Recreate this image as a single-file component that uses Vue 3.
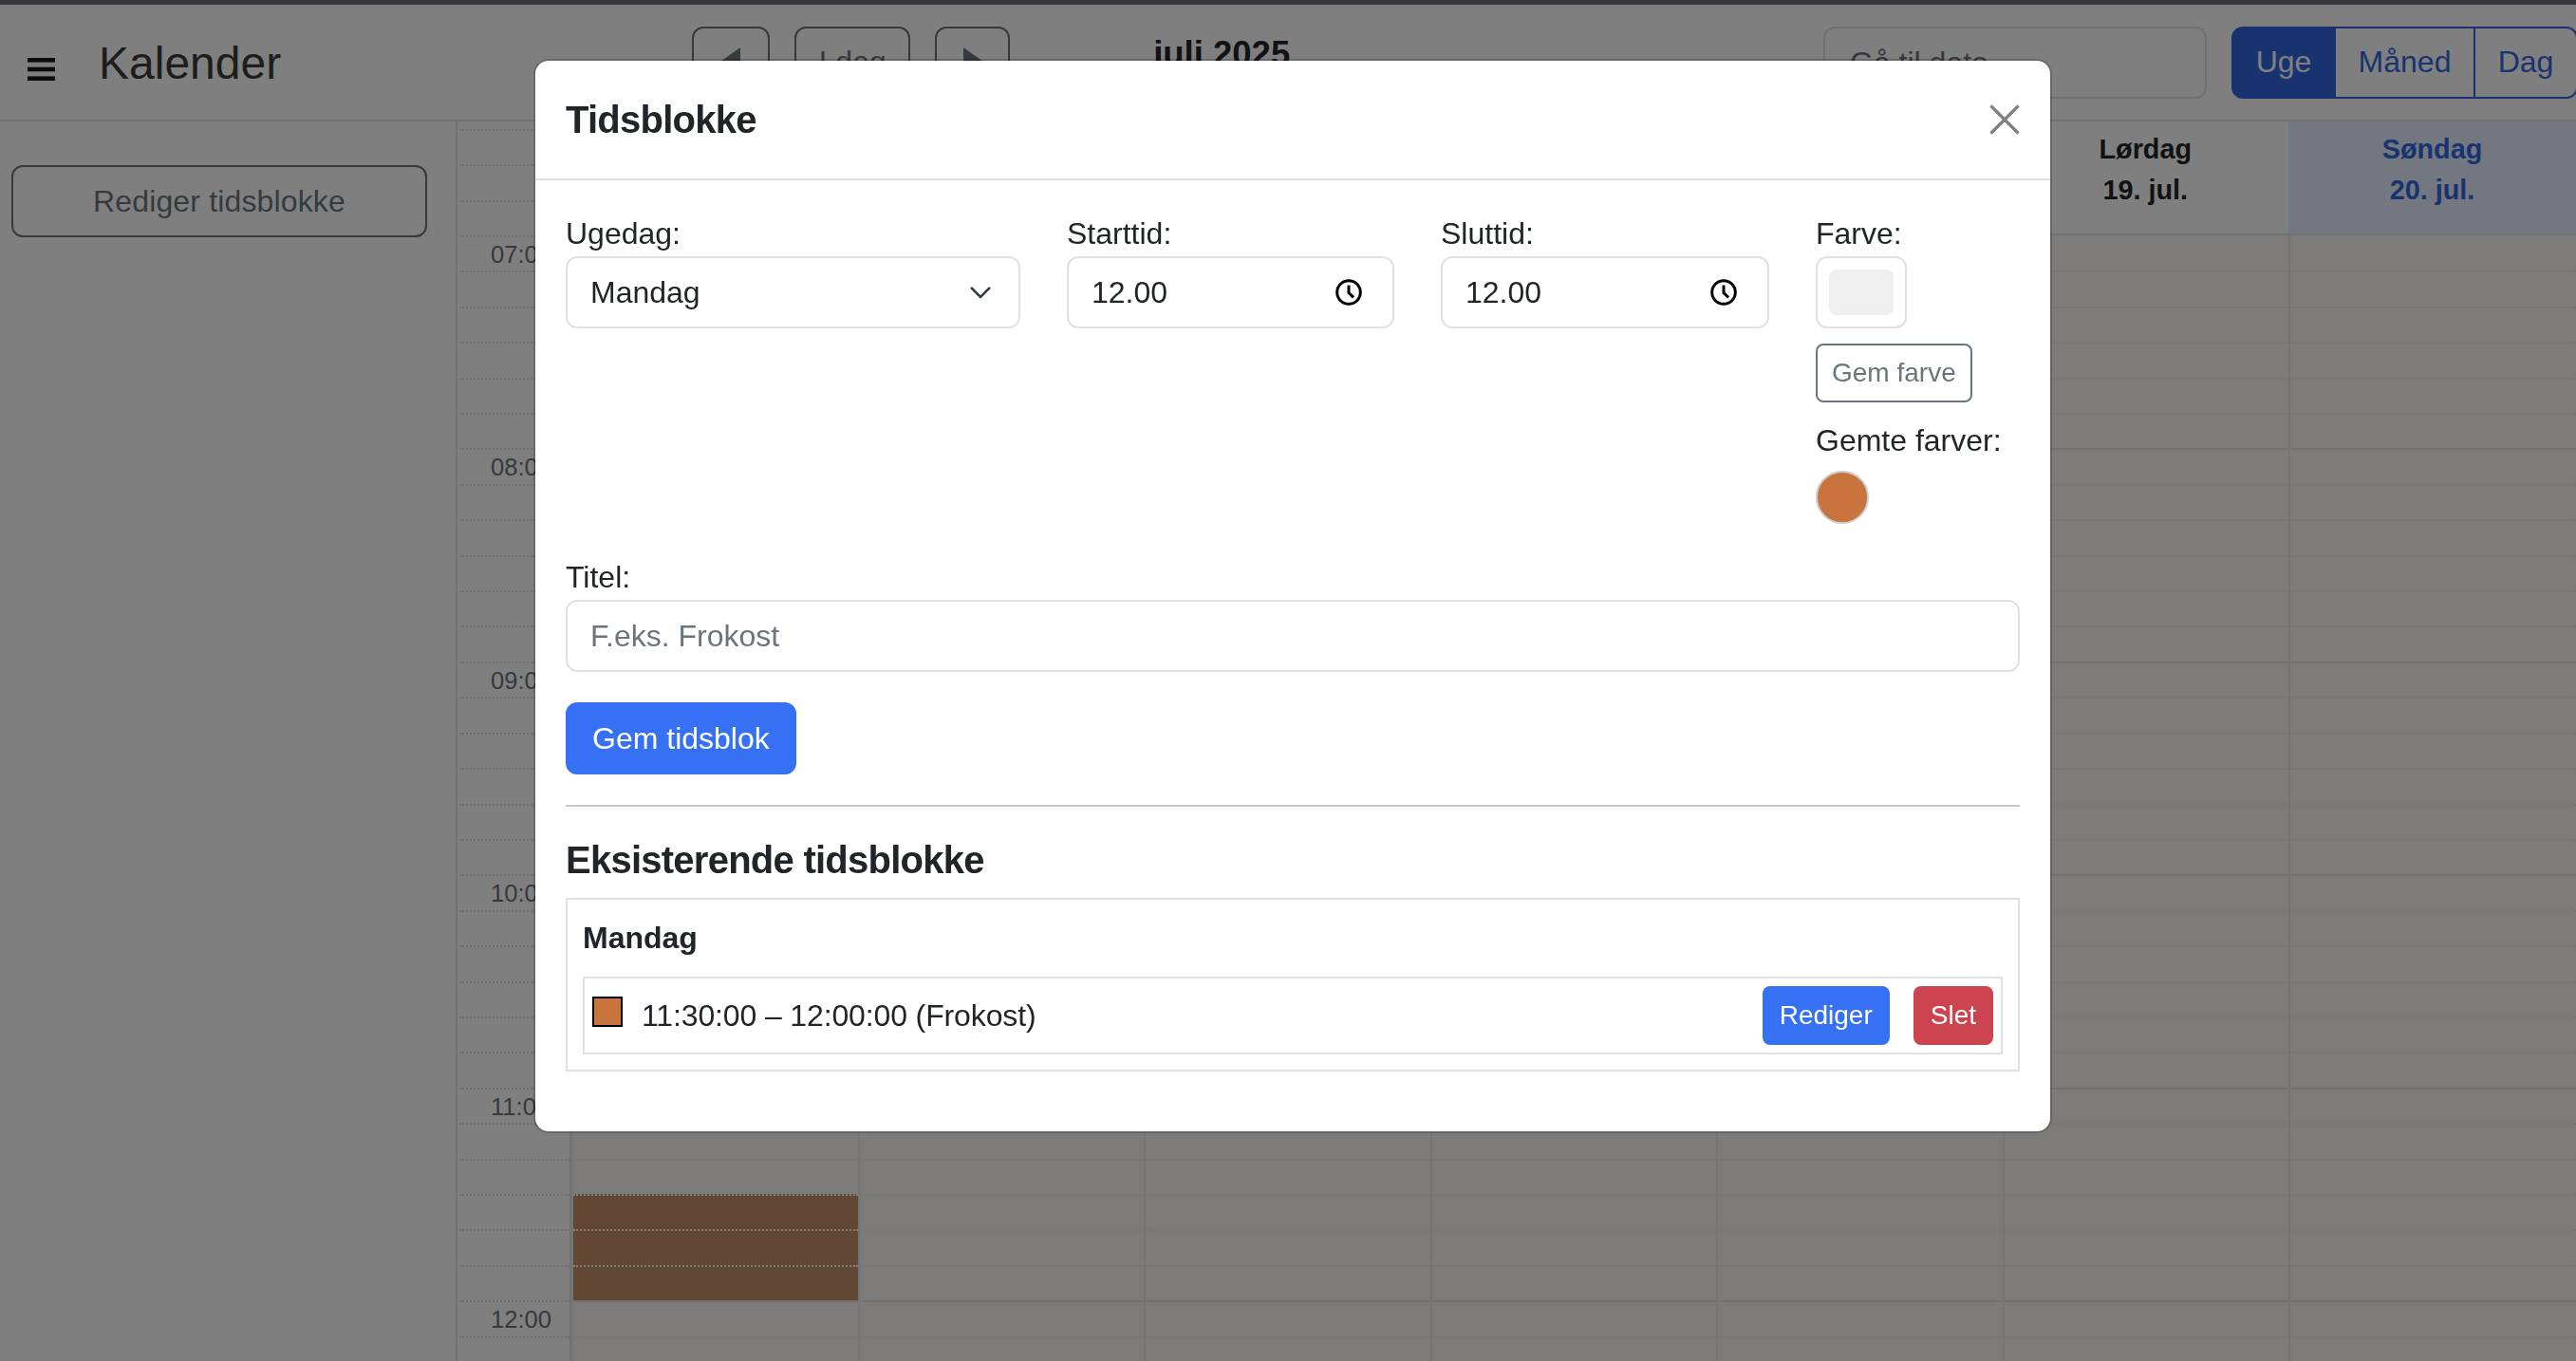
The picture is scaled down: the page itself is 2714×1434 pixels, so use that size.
<script setup>
const days = [
  ['Mandag', '14. jul.'],
  ['Tirsdag', '15. jul.'],
  ['Onsdag', '16. jul.'],
  ['Torsdag', '17. jul.'],
  ['Fredag', '18. jul.'],
  ['Lørdag', '19. jul.'],
  ['Søndag', '20. jul.']
]
const slotCount = 32
const daySlots = Array.from({ length: slotCount }, (_, i) => i)
const timeSlots = Array.from({ length: slotCount + 3 }, (_, n) => {
  const i = n - 3
  const label = i >= 0 && i % 6 === 0 ? String(7 + i / 6).padStart(2, '0') + ':00' : ''
  return { id: n, label }
})
const isBlocked = (dayIndex, slot) => dayIndex === 0 && slot >= 27 && slot <= 29
</script>

<template>
  <div class="page">
    <div class="chrome"></div>
    <header class="topbar">
      <svg class="burger" viewBox="0 0 29 24" width="29" height="24" aria-hidden="true">
        <rect x="0" y="0" width="29" height="4.6" />
        <rect x="0" y="9.7" width="29" height="4.6" />
        <rect x="0" y="19.4" width="29" height="4.6" />
      </svg>
      <h1 class="brand">Kalender</h1>
      <nav class="nav">
        <button class="nav-btn arrow">
          <svg viewBox="0 0 24 32" width="24" height="32" aria-hidden="true"><polygon points="24,0 24,32 0,17" /></svg>
        </button>
        <button class="nav-btn today">I dag</button>
        <button class="nav-btn arrow next">
          <svg viewBox="0 0 24 32" width="24" height="32" aria-hidden="true"><polygon points="0,0 0,32 24,17" /></svg>
        </button>
      </nav>
      <div class="month">juli 2025</div>
      <div class="goto">Gå til dato</div>
      <div class="views">
        <button class="view active">Uge</button>
        <button class="view">Måned</button>
        <button class="view">Dag</button>
      </div>
    </header>

    <main class="main">
      <aside class="sidebar">
        <button class="side-btn">Rediger tidsblokke</button>
      </aside>
      <section class="times">
        <div class="times-lead"></div>
        <div v-for="t in timeSlots" :key="t.id" class="time-slot">{{ t.label }}</div>
      </section>
      <section class="week">
        <div class="week-head">
          <div v-for="(d, i) in days" :key="d[0]" class="head-cell" :class="{ current: i === 6 }">
            <div>{{ d[0] }}</div>
            <div>{{ d[1] }}</div>
          </div>
        </div>
        <div class="week-body">
          <div v-for="(d, i) in days" :key="d[0]" class="day">
            <div
              v-for="s in daySlots"
              :key="s"
              class="slot"
              :class="{ hour: s % 6 === 0 && s > 0, first: s === 0, blocked: isBlocked(i, s) }"
            ></div>
          </div>
        </div>
      </section>
    </main>

    <div class="backdrop"></div>

    <div class="modal-wrap">
      <div class="modal">
        <div class="modal-head">
          <h2 class="modal-title">Tidsblokke</h2>
          <svg class="close" viewBox="0 0 32 32" width="32" height="32" aria-hidden="true">
            <path d="M1.5 1.5 30.5 30.5M30.5 1.5 1.5 30.5" />
          </svg>
        </div>
        <div class="modal-body">
          <div class="fields">
            <div>
              <div class="label">Ugedag:</div>
              <div class="control">
                <span>Mandag</span>
                <svg class="chevron" viewBox="0 0 16 16" width="32" height="32" aria-hidden="true"><path d="m3 5.4 5 5 5-5" /></svg>
              </div>
            </div>
            <div>
              <div class="label">Starttid:</div>
              <div class="control">
                <span>12.00</span>
                <svg class="clock" viewBox="0 0 28 28" width="28" height="28" aria-hidden="true"><circle cx="14" cy="14" r="12.3" /><path d="M14 6.5V14.6L19 19.4" /></svg>
              </div>
            </div>
            <div>
              <div class="label">Sluttid:</div>
              <div class="control">
                <span>12.00</span>
                <svg class="clock" viewBox="0 0 28 28" width="28" height="28" aria-hidden="true"><circle cx="14" cy="14" r="12.3" /><path d="M14 6.5V14.6L19 19.4" /></svg>
              </div>
            </div>
            <div>
              <div class="label">Farve:</div>
              <div class="color-input"><span class="color-fill"></span></div>
              <button class="save-color">Gem farve</button>
              <div class="label saved-label">Gemte farver:</div>
              <span class="saved-dot"></span>
            </div>
          </div>

          <div class="label">Titel:</div>
          <div class="control placeholder">F.eks. Frokost</div>

          <button class="primary">Gem tidsblok</button>

          <hr class="rule" />

          <h3 class="section-title">Eksisterende tidsblokke</h3>
          <div class="group">
            <div class="group-day">Mandag</div>
            <div class="entry">
              <span class="entry-swatch"></span>
              <span class="entry-text">11:30:00 – 12:00:00 (Frokost)</span>
              <button class="small blue">Rediger</button>
              <button class="small red">Slet</button>
            </div>
          </div>
        </div>
      </div>
    </div>
  </div>
</template>

<style>
html, body { margin: 0; overflow: hidden; background: #fff; }
</style>

<style scoped>
.page {
  height: 100vh;
  overflow: hidden;
  display: flex;
  flex-direction: column;
  font-family: "Liberation Sans", Arial, sans-serif;
  font-size: 32px;
  line-height: 1.5;
  color: #212529;
  background: #fff;
}
button { font-family: inherit; cursor: pointer; }
.chrome { height: 5px; flex: none; background: #70707c; }

.topbar {
  height: 123px;
  flex: none;
  box-sizing: border-box;
  display: flex;
  align-items: center;
  padding-left: 29px;
  border-bottom: 2px solid #dee2e6;
}
.burger { flex: none; fill: #1a1a1a; margin-top: 14px; }
.brand { margin: 2px 0 0 46px; font-size: 48px; font-weight: 400; color: #3a3a3a; line-height: 1.2; }
.nav { display: flex; gap: 26px; margin-left: 433px; }
.nav-btn {
  height: 76px;
  box-sizing: border-box;
  background: transparent;
  border: 2px solid #6c757d;
  border-radius: 12px;
  color: #6c757d;
  font-size: 32px;
  padding: 0;
  display: flex;
  align-items: center;
  justify-content: center;
}
.nav-btn svg { fill: #6c757d; margin-right: 4px; }
.nav-btn.next svg { margin-right: -4px; }
.arrow { width: 82px; }
.arrow.next { width: 79px; }
.today { width: 122px; }
.month {
  margin-left: 151px;
  align-self: flex-start;
  margin-top: 30px;
  font-size: 36.5px;
  font-weight: 700;
  line-height: 1.2;
}
.goto {
  margin-left: auto;
  width: 404px;
  height: 76px;
  box-sizing: border-box;
  border: 2px solid #dee2e6;
  border-radius: 12px;
  padding: 12px 26px;
  color: #6c757d;
}
.views { display: flex; margin-left: 26px; margin-right: -2px; flex: none; }
.view {
  height: 76px;
  box-sizing: border-box;
  width: 110px;
  padding: 0;
  font-size: 32px;
  border: 2px solid #3066e0;
  background: transparent;
  color: #3066e0;
  margin-left: -2px;
  text-align: center;
}
.view:first-child { margin-left: 0; border-radius: 12px 0 0 12px; }
.view:nth-child(2) { width: 149px; }
.view:last-child { border-radius: 0 12px 12px 0; }
.view.active { background: #3066e0; color: #fff; }

.main { flex: 1; min-height: 0; display: flex; overflow: hidden; }
.sidebar {
  width: 482px;
  flex: none;
  box-sizing: border-box;
  border-right: 2px solid #dee2e6;
  padding: 46px 30px 0 12px;
}
.side-btn {
  width: 100%;
  height: 76px;
  background: transparent;
  border: 2px solid #6c757d;
  border-radius: 12px;
  color: #6c757d;
  font-size: 32px;
  letter-spacing: 0.15px;
}
.times {
  width: 120px;
  flex: none;
  box-sizing: border-box;
  border-right: 2px solid #dee2e6;
}
.times-lead { height: 7.8px; }
.time-slot {
  height: 37.417px;
  box-sizing: border-box;
  border-top: 2px dotted #dedede;
  margin-left: 2px;
  padding-left: 33px;
  font-size: 25.6px;
  line-height: 37px;
  color: #6c757d;
  white-space: nowrap;
}
.week { flex: 1; min-width: 0; display: flex; flex-direction: column; }
.week-head {
  display: grid;
  grid-template-columns: repeat(6, 301.5px) 1fr;
  height: 120px;
  flex: none;
  box-sizing: border-box;
  border-bottom: 2px solid #dee2e6;
  background: #fff;
}
.head-cell {
  padding-top: 8px;
  text-align: center;
  font-size: 28.8px;
  font-weight: 700;
}
.head-cell.current { background: #e6eeff; color: #3066e0; }
.week-body {
  flex: 1;
  display: grid;
  grid-template-columns: repeat(6, 301.5px) 1fr;
  background: #f9f7f5;
  overflow: hidden;
}
.day { border-left: 2px solid #eaeaea; }
.slot {
  height: 37.417px;
  box-sizing: border-box;
  border-top: 2px dotted #ececea;
}
.slot.first { border-top-color: transparent; }
.slot.hour { border-top: 2px solid #dee2e6; }
.slot.blocked { background: #c48e6a; border-top: 2px dotted #fff; }

.backdrop { position: fixed; inset: 0; background: rgba(0, 0, 0, 0.5); }
.modal-wrap {
  position: fixed;
  inset: 0;
  display: flex;
  justify-content: center;
  align-items: flex-start;
  padding-left: 10px;
}
.modal {
  width: 1600px;
  box-sizing: border-box;
  margin-top: 62px;
  background: #fff;
  border: 2px solid rgba(0, 0, 0, 0.175);
  background-clip: padding-box;
  border-radius: 16px;
}
.modal-head {
  height: 126px;
  box-sizing: border-box;
  padding: 0 32px;
  display: flex;
  align-items: center;
  justify-content: space-between;
  border-bottom: 2px solid #dee2e6;
}
.modal-title { margin: 0; font-size: 40px; font-weight: 700; letter-spacing: -0.75px; }
.close { fill: none; stroke: #808080; stroke-width: 3.2; flex: none; }
.modal-body { padding: 32px 32px 63px; }
.fields {
  display: grid;
  grid-template-columns: 479px 345px 346px 1fr;
  column-gap: 49px;
  margin-bottom: 32px;
}
.label { height: 48px; }
.control {
  height: 76px;
  box-sizing: border-box;
  border: 2px solid #dee2e6;
  border-radius: 12px;
  padding: 12px 24px;
  display: flex;
  align-items: center;
  justify-content: space-between;
}
.placeholder { color: #6c757d; }
.chevron { flex: none; fill: none; stroke: #343a40; stroke-width: 1.3; }
.clock { flex: none; margin-right: 8px; fill: none; stroke: #000; stroke-width: 3; }
.color-input {
  width: 96px;
  height: 76px;
  box-sizing: border-box;
  border: 2px solid #dee2e6;
  border-radius: 12px;
  padding: 12px;
}
.color-fill { display: block; height: 100%; background: #efefef; border-radius: 8px; }
.save-color {
  display: block;
  margin-top: 16px;
  height: 62px;
  padding: 0 15px;
  font-size: 28px;
  color: #6c757d;
  background: #fff;
  border: 2px solid #6c757d;
  border-radius: 8px;
}
.saved-label { margin-top: 16px; margin-bottom: 8px; }
.saved-dot {
  display: block;
  width: 56px;
  height: 56px;
  box-sizing: border-box;
  border-radius: 50%;
  background: #c8743c;
  border: 2px solid #ccc;
}
.primary {
  display: block;
  margin-top: 32px;
  height: 76px;
  padding: 0 26px;
  font-size: 32px;
  color: #fff;
  background: #3670f5;
  border: 2px solid #3670f5;
  border-radius: 12px;
}
.rule { margin: 32px 0; height: 2px; border: 0; background: #c6c6c6; }
.section-title { margin: 0 0 16px; font-size: 40px; font-weight: 700; letter-spacing: -0.75px; line-height: 48px; }
.group { border: 2px solid #dee2e6; padding: 16px; }
.group-day { font-weight: 700; height: 48px; margin-bottom: 17px; }
.entry {
  border: 2px solid #dee2e6;
  padding: 8px;
  display: flex;
  align-items: center;
}
.entry-swatch {
  flex: none;
  align-self: flex-start;
  width: 32px;
  height: 32px;
  margin-top: 11px;
  box-sizing: border-box;
  background: #c8743c;
  border: 2px solid #000;
}
.entry-text { margin-left: 20px; flex: 1; letter-spacing: -0.13px; }
.small {
  height: 62px;
  padding: 0 16px;
  font-size: 28px;
  color: #fff;
  border-radius: 8px;
  border: 2px solid transparent;
}
.blue { background: #3670f5; }
.red { background: #cb444f; margin-left: 25px; }
</style>
